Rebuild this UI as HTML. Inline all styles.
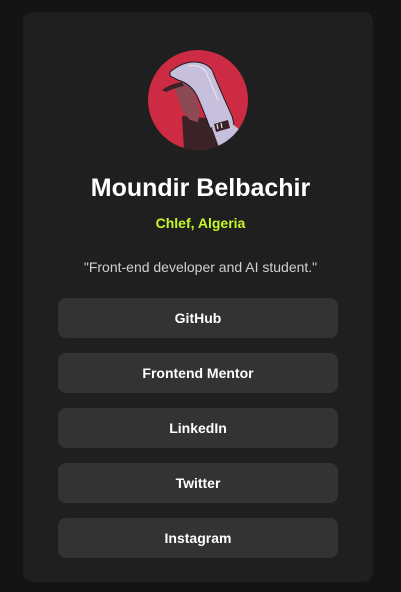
<!DOCTYPE html>
<html><head><meta charset="utf-8"><style>
*{margin:0;padding:0;box-sizing:border-box}
body{width:401px;height:592px;background:#141414;font-family:"Liberation Sans",sans-serif;position:relative;overflow:hidden}
.card{position:absolute;left:23px;top:12px;width:350px;height:570px;background:#1f1f1f;border-radius:10px}
.av{position:absolute;left:148px;top:50px;width:100px;height:100px;border-radius:50%;background:#cd2b43;overflow:hidden}
h1{position:absolute;top:174px;left:0;width:401px;text-align:center;color:#fff;font-size:25px;font-weight:bold}
.loc{position:absolute;top:215px;width:401px;text-align:center;color:#c4f82a;font-size:14px;font-weight:bold}
.q{position:absolute;top:259px;width:401px;text-align:center;color:#d0d0d0;font-size:14px}
.b{position:absolute;left:58px;width:280px;height:40px;background:#333;border-radius:8px;color:#fff;font-size:14px;font-weight:bold;text-align:center;line-height:40px}
</style></head><body>
<div class="card"></div>
<div class="av"><svg width="100" height="100" viewBox="0 0 100 100">
<path d="M34 66 L58 68 L80 76 L88 100 L36 100Z" fill="#3a2226"/>
<path d="M26 36 L38 32 L46 42 L52 62 L50 72 L42 70 L34 60 L30 48Z" fill="#8c4a55"/>
<path d="M14 40 Q22 34 34 32 L36 36 Q26 38 18 42Z" fill="#3a2226"/>
<path d="M22 22 Q34 12 46 12 Q58 12 64 20 Q72 40 84 66 L86 74 L72 78 L62 78 Q56 62 50 48 Q44 34 30 30 Q26 28 22 26Z" fill="#c7c0dc" stroke="#1e1a24" stroke-width="1"/>
<path d="M64 78 L82 72 L92 80 L100 100 L72 100Z" fill="#c7c0dc"/>
<path d="M66 74 L80 70 L82 78 L68 82Z" fill="#3a2226"/>
<path d="M69 74 L70 79 M73 73 L74 78" stroke="#e8e4f2" stroke-width="1.2"/>
<path d="M40 16 Q52 14 58 22 L70 50" stroke="#ebe7f4" stroke-width="1" fill="none"/>
</svg></div>
<h1>Moundir Belbachir</h1>
<div class="loc">Chlef, Algeria</div>
<div class="q">"Front-end developer and AI student."</div>
<div class="b" style="top:298px">GitHub</div>
<div class="b" style="top:353px">Frontend Mentor</div>
<div class="b" style="top:408px">LinkedIn</div>
<div class="b" style="top:463px">Twitter</div>
<div class="b" style="top:518px">Instagram</div>
</body></html>
